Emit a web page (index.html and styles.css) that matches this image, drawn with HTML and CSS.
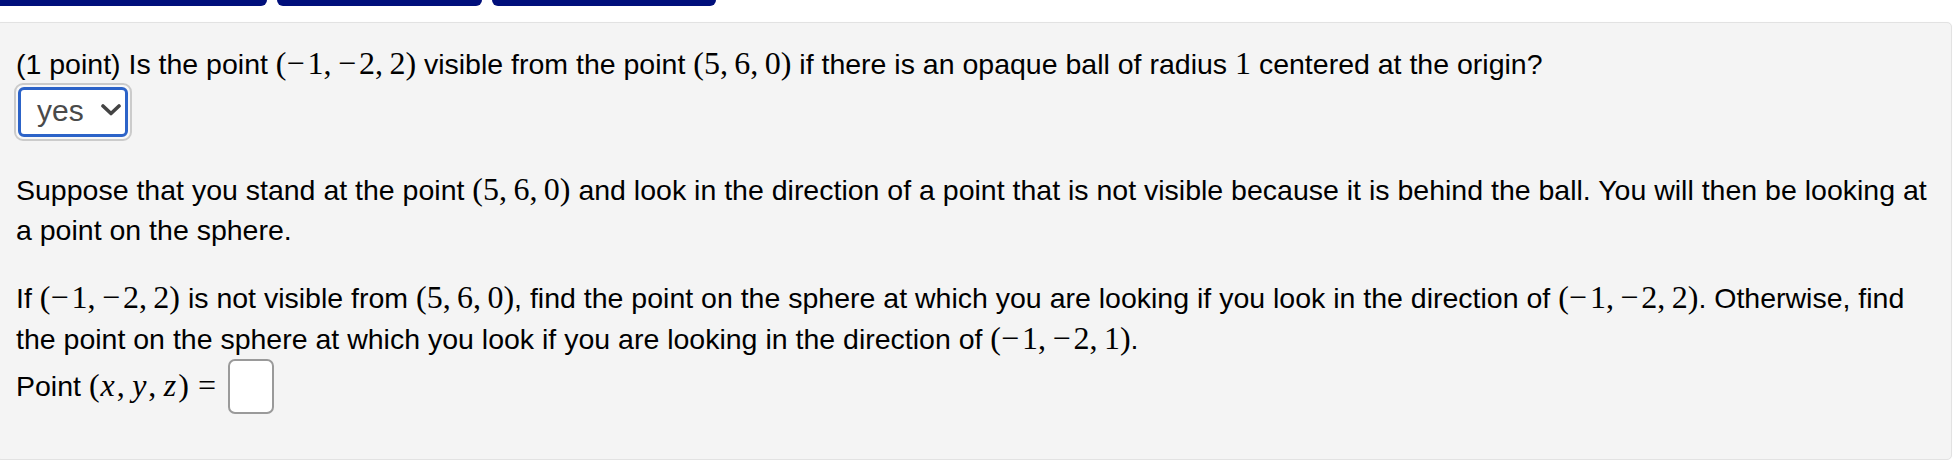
FILE: index.html
```html
<!DOCTYPE html>
<html>
<head>
<meta charset="utf-8">
<link rel="stylesheet" href="styles.css">
</head>
<body>
<div class="tabs">
  <div class="tab tab-1"></div>
  <div class="tab tab-2"></div>
  <div class="tab tab-3"></div>
</div>
<div class="problem">
  <p class="para">(1 point) Is the point <span class="m">(<span class="neg">−</span>1,&thinsp;<span class="neg">−</span>2,&thinsp;2)</span> visible from the point <span class="m">(5,&thinsp;6,&thinsp;0)</span> if there is an opaque ball of radius <span class="m">1</span> centered at the origin?</p>
  <div class="select">
    <div class="select-inner">
      <span class="select-value">yes</span>
      <svg class="chev" width="20" height="12" viewBox="0 0 20 12"><polyline points="2,2 10,9.5 18,2" fill="none" stroke="#444" stroke-width="3.6" stroke-linecap="round" stroke-linejoin="round"/></svg>
    </div>
  </div>
  <p class="para gap-a">Suppose that you stand at the point <span class="m">(5,&thinsp;6,&thinsp;0)</span> and look in the direction of a point that is not visible because it is behind the ball. You will then be looking at<br>a point on the sphere.</p>
  <p class="para gap-b">If <span class="m">(<span class="neg">−</span>1,&thinsp;<span class="neg">−</span>2,&thinsp;2)</span> is not visible from <span class="m">(5,&thinsp;6,&thinsp;0)</span>, find the point on the sphere at which you are looking if you look in the direction of <span class="m">(<span class="neg">−</span>1,&thinsp;<span class="neg">−</span>2,&thinsp;2)</span>. Otherwise, find<br>the point on the sphere at which you look if you are looking in the direction of <span class="m">(<span class="neg">−</span>1,&thinsp;<span class="neg">−</span>2,&thinsp;1)</span>.<br>Point <span class="m">(<i>x</i>,&thinsp;<i>y</i>,&thinsp;<i>z</i>)<span class="eq">=</span></span><span class="answer"></span></p>
</div>
</body>
</html>
```

FILE: styles.css
```css
html, body {
  margin: 0;
  padding: 0;
  background: #ffffff;
}
body {
  font-family: "Liberation Sans", Arial, Helvetica, sans-serif;
  color: #000;
  overflow: hidden;
}
.tabs {
  display: flex;
  gap: 10px;
  height: 6px;
}
.tab {
  height: 6px;
  background: #000f7b;
  border-radius: 0 0 6px 6px;
}
.tab-1 { width: 267px; border-bottom-left-radius: 0; }
.tab-2 { width: 205px; }
.tab-3 { width: 224px; }

.problem {
  margin: 16px 6px 0 -4px;
  height: 438px;
  box-sizing: border-box;
  background: #f4f4f4;
  border: 1px solid #e2e2e2;
  border-radius: 5px;
  box-shadow: 0 0 1px rgba(0,0,0,0.06);
  padding: 20px 0 0 19px;
}
.para {
  margin: 0;
  font-size: 28.5px;
  line-height: 40px;
  white-space: nowrap;
}
.m {
  font-family: "Liberation Serif", "Times New Roman", serif;
  font-size: 32px;
}
.m i {
  font-style: italic;
  padding: 0 2px 0 1px;
}
.neg {
  margin: 0 3px 0 0;
}
.eq {
  margin: 0 0 0 9px;
  padding-right: 2px;
}
.select {
  display: inline-block;
  margin: -1px 0 0 -2px;
  border: 2px solid #cbcbcb;
  border-radius: 9px;
  padding: 2px;
  background: #f8f8f8;
}
.select-inner {
  box-sizing: border-box;
  width: 110px;
  height: 50px;
  border: 3px solid #2c63c8;
  border-radius: 6px;
  background: #fff;
  display: flex;
  align-items: center;
  padding-left: 16px;
  gap: 17px;
}
.select-value {
  font-size: 30px;
  color: #4a4a4a;
  line-height: 1;
  margin-top: -2px;
}
.chev {
  display: block;
  margin-top: -4px;
}
.gap-a { margin-top: 28px; }
.gap-b { margin-top: 27px; }
.answer {
  display: inline-block;
  box-sizing: border-box;
  width: 46px;
  height: 55px;
  margin-left: 10px;
  border: 2px solid #9a9a9a;
  border-radius: 7px;
  background: #fff;
  vertical-align: -18px;
}
```
